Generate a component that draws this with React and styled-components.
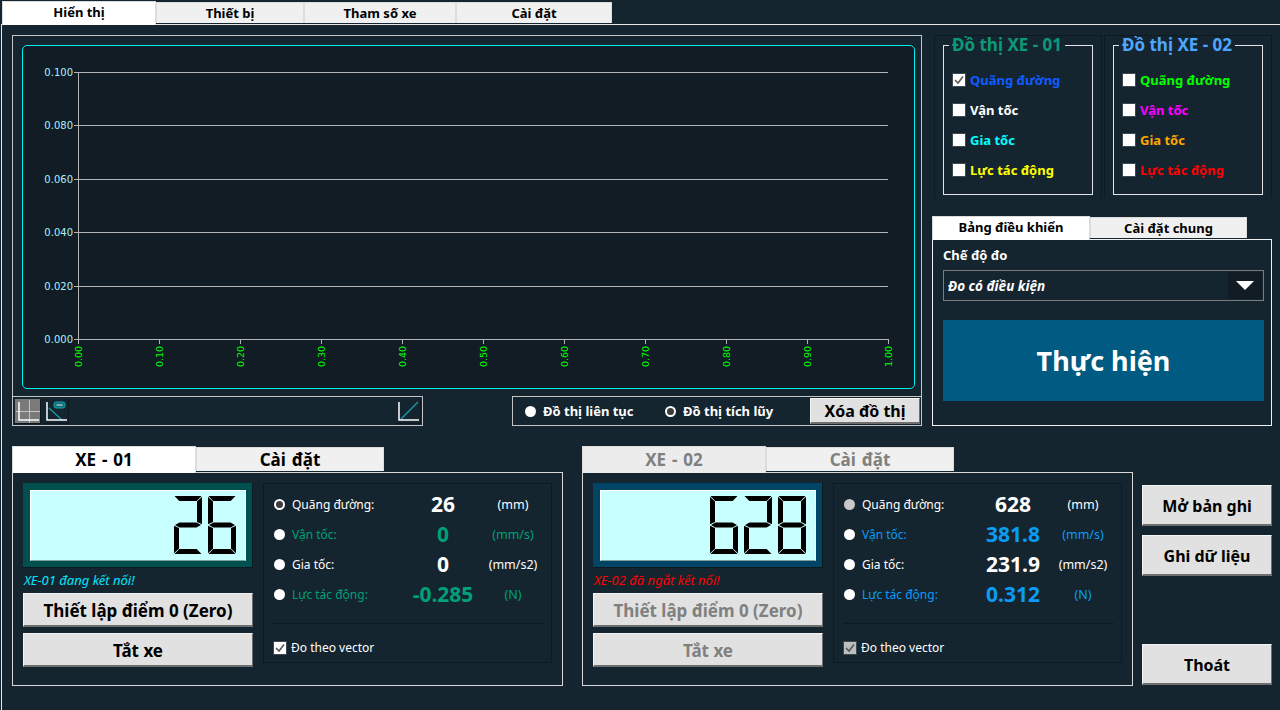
import React from 'react';
import styled, { createGlobalStyle } from 'styled-components';

const FONT = '"Noto Sans", "Open Sans", sans-serif';

const GlobalStyle = createGlobalStyle`
  html, body {
    margin: 0;
    padding: 0;
    background: #15252f;
    overflow: hidden;
  }
  * { box-sizing: border-box; }
`;

const Page = styled.div`
  width: 1280px;
  height: 710px;
  padding-left: 1px;
  background: #15252f;
  font-family: ${FONT};
  overflow: hidden;
`;

const TabBar = styled.div`
  display: flex;
  align-items: flex-end;
  height: ${(p) => p.$height}px;
  padding-left: ${(p) => p.$inset || 0}px;
`;

const Tab = styled.div`
  display: flex;
  align-items: center;
  justify-content: center;
  width: ${(p) => p.$width}px;
  height: ${(p) => (p.$active ? p.$height : p.$height - 3)}px;
  margin-bottom: ${(p) => (p.$active ? -1 : 1)}px;
  padding-bottom: ${(p) => (p.$active ? (p.$size > 16 ? 1 : 3) : 0)}px;
  position: relative;
  background: ${(p) => (p.$active ? (p.$muted ? '#ececec' : '#ffffff') : '#f0f0f0')};
  border: 1px solid #dcdcdc;
  border-bottom: none;
  color: ${(p) => (p.$muted ? '#808080' : '#000000')};
  font-size: ${(p) => p.$size}px;
  font-weight: 700;
  word-spacing: ${(p) => (p.$size > 16 ? 1.5 : 0)}px;
  white-space: nowrap;
`;

const MainPane = styled.div`
  height: 686px;
  padding: 10px 0 0 10px;
  border-top: 1px solid #e8e8e8;
  border-left: 1px solid #e8e8e8;
`;

const TopRow = styled.div`
  display: flex;
  height: 391px;
`;

const ChartColumn = styled.div`
  display: flex;
  flex-direction: column;
  width: 910px;
`;

const ChartFrame = styled.div`
  height: 361px;
  padding: 9px 6px 7px 9px;
  border: 1px solid #c4c4c4;
  border-bottom: none;
`;

const Plot = styled.div`
  height: 344px;
  background: #111c24;
  border: 1px solid #00f0f0;
  border-radius: 5px;
  svg { display: block; }
`;

const ChartFooter = styled.div`
  display: flex;
  justify-content: space-between;
  height: 30px;
`;

const Toolbar = styled.div`
  display: flex;
  align-items: center;
  justify-content: space-between;
  width: 411px;
  padding: 0 1px 0 2px;
  border: 1px solid #c4c4c4;
`;

const ToolGroup = styled.div`
  display: flex;
  gap: 2px;
`;

const ToolButton = styled.div`
  width: 26px;
  height: 25px;
  background: ${(p) => (p.$active ? '#7a7a7a' : '#15252f')};
  box-shadow: inset -1px -1px 0 #0d1820;
  svg { display: block; }
`;

const PlotOptions = styled.div`
  display: flex;
  align-items: center;
  width: 410px;
  padding: 0 1px 0 12px;
  border: 1px solid #c4c4c4;
  color: #ffffff;
  font-size: 13px;
  font-weight: 700;
`;

const PlotOption = styled.div`
  display: flex;
  align-items: center;
  gap: 7px;
  width: 140px;
  white-space: nowrap;
`;

const Radio = styled.span`
  display: block;
  flex: none;
  width: 11px;
  height: 11px;
  border-radius: 50%;
  background: ${(p) => (p.$selected ? '#3c3c3c' : p.$muted ? '#c8c8c8' : '#ffffff')};
  border: ${(p) => (p.$selected ? '2px solid #ffffff' : 'none')};
`;

const Button = styled.div`
  display: flex;
  align-items: center;
  justify-content: center;
  width: ${(p) => p.$width || 230}px;
  height: ${(p) => p.$height}px;
  padding-top: 1px;
  background: #e1e1e1;
  border: 1px solid #f4f4f4;
  border-right: 1px solid #6e6e6e;
  border-bottom: 2px solid #6e6e6e;
  color: ${(p) => (p.$disabled ? '#808080' : '#000000')};
  font-size: ${(p) => p.$size || 16}px;
  font-weight: 700;
  white-space: nowrap;
`;

const ClearButton = styled(Button)`
  margin-left: auto;
  padding-top: 0;
`;

const SideColumn = styled.div`
  display: flex;
  flex-direction: column;
  margin-left: 10px;
  width: 340px;
`;

const Groups = styled.div`
  display: flex;
  gap: 2px;
  height: 163px;
  padding-left: 2px;
`;

const GroupPanel = styled.div`
  width: 168px;
  padding: 0 8px;
  border: 1px solid #0e1a22;
  border-bottom: none;
`;

const Group = styled.fieldset`
  height: 160px;
  margin: -1px 0 0;
  padding: 10px 0 0 9px;
  border: 1px solid #e4e4e4;
  legend {
    margin-left: -4px;
    padding: 0 3px;
    color: ${(p) => p.$color};
    font-size: 17px;
    font-weight: 700;
    line-height: 20px;
    white-space: nowrap;
  }
`;

const CheckRow = styled.div`
  display: flex;
  align-items: center;
  gap: 5px;
  height: 30px;
  color: ${(p) => p.$color};
  font-size: 13px;
  font-weight: 700;
`;

const Box = styled.span`
  display: flex;
  flex: none;
  align-items: center;
  justify-content: center;
  width: 12px;
  height: 12px;
  background: ${(p) => (p.$muted ? '#bdbdbd' : '#ffffff')};
  outline: 1px solid #3a4850;
  svg { display: block; }
`;

const ControlTabs = styled(TabBar)`
  margin-top: 17px;
`;

const ControlPane = styled.div`
  height: 187px;
  padding: 5px 7px 0 10px;
  border: 1px solid #f0f0f0;
  color: #ffffff;
`;

const FieldLabel = styled.div`
  height: 25px;
  font-size: 13px;
  font-weight: 700;
  line-height: 20px;
`;

const Select = styled.div`
  display: flex;
  align-items: center;
  justify-content: space-between;
  height: 31px;
  padding: 1px 1px 1px 4px;
  border: 1px solid #7c7c7c;
  font-size: 13.5px;
  font-style: italic;
  font-weight: 700;
`;

const SelectArrow = styled.span`
  display: flex;
  align-items: center;
  justify-content: center;
  width: 34px;
  height: 100%;
  background: #111c24;
  &::after {
    content: '';
    border-left: 9px solid transparent;
    border-right: 9px solid transparent;
    border-top: 9px solid #ffffff;
  }
`;

const RunButton = styled.div`
  display: flex;
  align-items: center;
  justify-content: center;
  height: 81px;
  margin-top: 19px;
  background: #005a82;
  font-size: 27px;
  font-weight: 700;
`;

const BottomRow = styled.div`
  display: flex;
  height: 240px;
  margin-top: 19px;
`;

const Vehicle = styled.div`
  width: 551px;
  margin-right: ${(p) => p.$gap}px;
`;

const VehiclePanel = styled.div`
  display: flex;
  gap: 10px;
  height: 214px;
  padding: 10px;
  border: 1px solid #d8d8d8;
`;

const VehicleLeft = styled.div`
  display: flex;
  flex-direction: column;
  width: 230px;
`;

const Lcd = styled.div`
  display: flex;
  justify-content: flex-end;
  height: 85px;
  padding: 7px;
  background: ${(p) => p.$frame};
  box-shadow: inset -1px -1px 0 #0c1a20;
`;

const LcdScreen = styled.div`
  display: flex;
  justify-content: flex-end;
  gap: 6px;
  width: 100%;
  padding: 5px 9px 0 0;
  background: #c8ffff;
  border: 1px solid #ffffff;
  border-bottom: 1px solid #7f9f9f;
  border-right: 1px solid #ffffff;
  svg { display: block; }
`;

const Status = styled.div`
  height: 25px;
  padding-left: 1px;
  color: ${(p) => p.$color};
  font-size: 13px;
  font-style: italic;
  line-height: 25px;
`;

const ZeroButton = styled(Button)`
  margin-bottom: 6px;
`;

const Metrics = styled.div`
  width: 290px;
  height: 180px;
  padding: 5px 7px 0 10px;
  border: 1px solid #0e1a22;
`;

const MetricRow = styled.div`
  display: grid;
  grid-template-columns: 18px 111px 80px 60px;
  align-items: center;
  height: ${(p) => p.$height}px;
  color: ${(p) => p.$color};
  font-size: 12px;
`;

const MetricValue = styled.span`
  font-size: 21px;
  font-weight: 700;
  text-align: center;
  white-space: nowrap;
`;

const MetricUnit = styled.span`
  font-size: 12.5px;
  text-align: center;
  white-space: nowrap;
`;

const MetricRule = styled.div`
  height: 1px;
  margin: 14px 0 0 -1px;
  background: #0e1a22;
`;

const VectorRow = styled.div`
  display: flex;
  align-items: center;
  gap: 5px;
  height: 47px;
  color: #ffffff;
  font-size: 12px;
`;

const SideButtons = styled.div`
  display: flex;
  flex-direction: column;
  gap: 9px;
  padding-top: 40px;
`;

const ExitButton = styled(Button)`
  margin-top: auto;
`;

const Tick = ({ checked }) =>
  checked ? (
    <svg width="10" height="10" viewBox="0 0 10 10">
      <path d="M1 5 L4 8 L9 1.5" fill="none" stroke="#555" strokeWidth="1.5" />
    </svg>
  ) : null;

const SEGMENTS = {
  a: '0.5,0 27.5,0 22.7,5 5.3,5',
  b: '28,0.7 28,28.3 23,26 23,5.5',
  c: '28,29.7 28,57.3 23,52.5 23,32',
  d: '0.5,58 27.5,58 22.7,53 5.3,53',
  e: '0,29.7 0,57.3 5,52.5 5,32',
  f: '0,0.7 0,28.3 5,26 5,5.5',
  g: '1,29 5.5,26.5 22.5,26.5 27,29 22.5,31.5 5.5,31.5',
};

const DIGITS = {
  2: 'abged',
  6: 'afgedc',
  8: 'abcdefg',
};

const LcdDigit = ({ value }) => (
  <svg width="28" height="58" viewBox="0 0 28 58">
    {DIGITS[value].split('').map((s) => (
      <polygon key={s} points={SEGMENTS[s]} fill="#000000" />
    ))}
  </svg>
);

const Y_TICKS = ['0.100', '0.080', '0.060', '0.040', '0.020', '0.000'];
const X_TICKS = ['0.00', '0.10', '0.20', '0.30', '0.40', '0.50', '0.60', '0.70', '0.80', '0.90', '1.00'];

// plot coordinates are relative to the cyan frame
const PlotChart = () => (
  <svg width="892" height="342" fontFamily='"DejaVu Sans", sans-serif' fontSize="10">
    <g stroke="#b4b4b4" shapeRendering="crispEdges">
      {Y_TICKS.map((t, i) => {
        const y = Math.round(26 + i * 53.4);
        return <line key={t} x1="51" x2="865" y1={y + 0.5} y2={y + 0.5} />;
      })}
      <line x1="55.5" x2="55.5" y1="26" y2="297" />
      {X_TICKS.map((t, i) => {
        const x = Math.round(55 + i * 81) + 0.5;
        return <line key={t} x1={x} x2={x} y1="293" y2="298" />;
      })}
    </g>
    {Y_TICKS.map((t, i) => (
      <text key={t} x="50" y={30 + i * 53.4} textAnchor="end" fill="#a8f0ff">{t}</text>
    ))}
    {X_TICKS.map((t, i) => {
      const x = 55 + i * 81 + 4;
      return (
        <text key={t} transform={`translate(${x} 321) rotate(-90)`} fill="#00ff00" fontSize="9.5">{t}</text>
      );
    })}
  </svg>
);

const AxisIcon = ({ children }) => (
  <svg width="26" height="25" viewBox="0 0 26 25">
    {children}
    <path d="M4 3 V21 H24" fill="none" stroke="#ffffff" strokeWidth="1.5" />
  </svg>
);

const Metric = ({ state, muted, color, label, value, unit }) => (
  <MetricRow $color={color} $height={30}>
    <Radio $selected={state === 'on'} $muted={muted} />
    <span>{label}</span>
    <MetricValue>{value}</MetricValue>
    <MetricUnit>{unit}</MetricUnit>
  </MetricRow>
);

const VEHICLES = [
  {
    name: 'XE - 01',
    gap: 19,
    muted: false,
    frame: '#00504f',
    accent: '#00a078',
    digits: '26',
    status: 'XE-01 đang kết nối!',
    statusColor: '#00e5ff',
    values: ['26', '0', '0', '-0.285'],
  },
  {
    name: 'XE - 02',
    gap: 9,
    muted: true,
    frame: '#004566',
    accent: '#0a9cf5',
    digits: '628',
    status: 'XE-02 đã ngắt kết nối!',
    statusColor: '#ff0000',
    values: ['628', '381.8', '231.9', '0.312'],
  },
];

const METRICS = [
  { label: 'Quãng đường:', unit: '(mm)' },
  { label: 'Vận tốc:', unit: '(mm/s)', accent: true },
  { label: 'Gia tốc:', unit: '(mm/s2)' },
  { label: 'Lực tác động:', unit: '(N)', accent: true },
];

const GROUPS = [
  {
    title: 'Đồ thị XE - 01',
    color: '#0a9a78',
    rows: [
      { label: 'Quãng đường', color: '#0f5cff', checked: true },
      { label: 'Vận tốc', color: '#ffffff' },
      { label: 'Gia tốc', color: '#00ffff' },
      { label: 'Lực tác động', color: '#ffff00' },
    ],
  },
  {
    title: 'Đồ thị XE - 02',
    color: '#4da6ff',
    rows: [
      { label: 'Quãng đường', color: '#00ff00' },
      { label: 'Vận tốc', color: '#ff00ff' },
      { label: 'Gia tốc', color: '#ffa500' },
      { label: 'Lực tác động', color: '#ff0000' },
    ],
  },
];

const VehicleCard = ({ v }) => (
  <Vehicle $gap={v.gap}>
    <TabBar $height={27}>
      <Tab $active $muted={v.muted} $width={184} $height={27} $size={17}>{v.name}</Tab>
      <Tab $muted={v.muted} $width={188} $height={27} $size={17}>Cài đặt</Tab>
    </TabBar>
    <VehiclePanel>
      <VehicleLeft>
        <Lcd $frame={v.frame}>
          <LcdScreen>
            {v.digits.split('').map((d, i) => <LcdDigit key={i} value={d} />)}
          </LcdScreen>
        </Lcd>
        <Status $color={v.statusColor}>{v.status}</Status>
        <ZeroButton $height={34} $size={17} $disabled={v.muted}>Thiết lập điểm 0 (Zero)</ZeroButton>
        <Button $height={34} $size={17} $disabled={v.muted}>Tắt xe</Button>
      </VehicleLeft>
      <Metrics>
        {METRICS.map((m, i) => (
          <Metric
            key={m.label}
            state={i === 0 ? (v.muted ? 'grey' : 'on') : 'off'}
            muted={i === 0 && v.muted}
            color={m.accent ? v.accent : '#ffffff'}
            label={m.label}
            value={v.values[i]}
            unit={m.unit}
          />
        ))}
        <MetricRule />
        <VectorRow>
          <Box $muted={v.muted}><Tick checked /></Box>
          Đo theo vector
        </VectorRow>
      </Metrics>
    </VehiclePanel>
  </Vehicle>
);

export default function App() {
  return (
    <Page>
      <GlobalStyle />
      <TabBar $height={24} $inset={1}>
        <Tab $active $width={154} $height={24} $size={13}>Hiển thị</Tab>
        <Tab $width={148} $height={24} $size={13}>Thiết bị</Tab>
        <Tab $width={152} $height={24} $size={13}>Tham số xe</Tab>
        <Tab $width={156} $height={24} $size={13}>Cài đặt</Tab>
      </TabBar>
      <MainPane>
        <TopRow>
          <ChartColumn>
            <ChartFrame>
              <Plot><PlotChart /></Plot>
            </ChartFrame>
            <ChartFooter>
              <Toolbar>
                <ToolGroup>
                  <ToolButton $active>
                    <AxisIcon>
                      <path d="M1 12.5 H25 M14.5 1 V24" stroke="#c4c4c4" />
                    </AxisIcon>
                  </ToolButton>
                  <ToolButton>
                    <AxisIcon>
                      <path d="M6 9 L19 21" stroke="#18a0a8" strokeWidth="1.2" />
                      <rect x="11" y="3" width="11" height="6" rx="2" fill="#0f6f78" stroke="#18a0a8" />
                      <path d="M13.5 6 H19.5" stroke="#d8f4f4" />
                    </AxisIcon>
                  </ToolButton>
                </ToolGroup>
                <ToolButton>
                  <AxisIcon>
                    <path d="M6 20 L23 3" stroke="#18a0a8" strokeWidth="1.2" />
                  </AxisIcon>
                </ToolButton>
              </Toolbar>
              <PlotOptions>
                <PlotOption><Radio />Đồ thị liên tục</PlotOption>
                <PlotOption><Radio $selected />Đồ thị tích lũy</PlotOption>
                <ClearButton $width={110} $height={26}>Xóa đồ thị</ClearButton>
              </PlotOptions>
            </ChartFooter>
          </ChartColumn>
          <SideColumn>
            <Groups>
              {GROUPS.map((g) => (
                <GroupPanel key={g.title}>
                  <Group $color={g.color}>
                    <legend>{g.title}</legend>
                    {g.rows.map((r) => (
                      <CheckRow key={r.label} $color={r.color}>
                        <Box><Tick checked={r.checked} /></Box>
                        {r.label}
                      </CheckRow>
                    ))}
                  </Group>
                </GroupPanel>
              ))}
            </Groups>
            <ControlTabs $height={24}>
              <Tab $active $width={158} $height={24} $size={13}>Bảng điều khiển</Tab>
              <Tab $width={157} $height={24} $size={13}>Cài đặt chung</Tab>
            </ControlTabs>
            <ControlPane>
              <FieldLabel>Chế độ đo</FieldLabel>
              <Select>
                Đo có điều kiện
                <SelectArrow />
              </Select>
              <RunButton>Thực hiện</RunButton>
            </ControlPane>
          </SideColumn>
        </TopRow>
        <BottomRow>
          {VEHICLES.map((v) => <VehicleCard key={v.name} v={v} />)}
          <SideButtons>
            <Button $width={130} $height={41}>Mở bản ghi</Button>
            <Button $width={130} $height={41}>Ghi dữ liệu</Button>
            <ExitButton $width={130} $height={41}>Thoát</ExitButton>
          </SideButtons>
        </BottomRow>
      </MainPane>
    </Page>
  );
}
